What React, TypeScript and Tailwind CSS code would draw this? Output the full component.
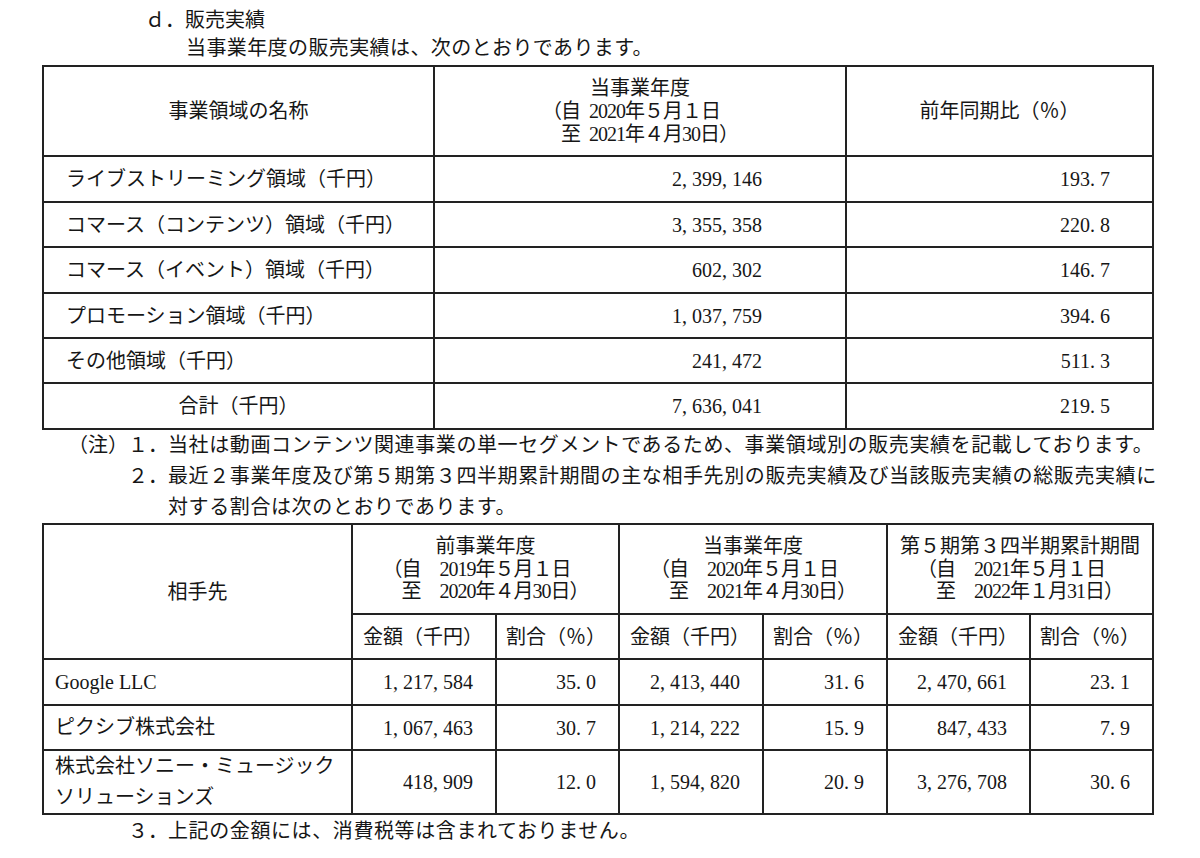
import React from 'react';

const cell = 'border-2 border-[#222] font-normal p-0';

function Num({ v }: { v: string }) {
  return (
    <>
      {v.split('').map((c, i) =>
        c === ',' || c === '.' ? (
          <span key={i} className="inline-block w-[10px] text-left">
            {c}
          </span>
        ) : (
          <span key={i}>{c}</span>
        ),
      )}
    </>
  );
}

function Period({ title, from, to, lh }: { title: string; from: string; to: string; lh: string }) {
  return (
    <div className={`flex flex-col items-center ${lh}`}>
      <div>{title}</div>
      <div className="text-left tracking-[-1px] whitespace-pre">
        <div>{from}</div>
        <div>{to}</div>
      </div>
    </div>
  );
}

const sales = [
  { name: 'ライブストリーミング領域（千円）', amount: '2,399,146', ratio: '193.7', h: 'h-[46px]' },
  { name: 'コマース（コンテンツ）領域（千円）', amount: '3,355,358', ratio: '220.8', h: 'h-[45px]' },
  { name: 'コマース（イベント）領域（千円）', amount: '602,302', ratio: '146.7', h: 'h-[46px]' },
  { name: 'プロモーション領域（千円）', amount: '1,037,759', ratio: '394.6', h: 'h-[45px]' },
  { name: 'その他領域（千円）', amount: '241,472', ratio: '511.3', h: 'h-[45px]' },
];

const clients = [
  {
    name: ['Google LLC'],
    v: ['1,217,584', '35.0', '2,413,440', '31.6', '2,470,661', '23.1'],
    h: 'h-[46px]',
  },
  {
    name: ['ピクシブ株式会社'],
    v: ['1,067,463', '30.7', '1,214,222', '15.9', '847,433', '7.9'],
    h: 'h-[45px]',
  },
  {
    name: ['株式会社ソニー・ミュージック', 'ソリューションズ'],
    v: ['418,909', '12.0', '1,594,820', '20.9', '3,276,708', '30.6'],
    h: 'h-[63px]',
  },
];

export default function App() {
  return (
    <div className="w-[1200px] h-[858px] overflow-hidden bg-white text-[#161616] text-[20px] font-['Liberation_Serif','Noto_Sans_CJK_JP',serif] whitespace-nowrap">
      <div className="pt-[6px] leading-[28px]">
        <div className="pl-[145px]">ｄ．販売実績</div>
        <div className="pl-[186px] tracking-[0.4px]">当事業年度の販売実績は、次のとおりであります。</div>
      </div>

      <table className="mt-[3px] ml-[42px] w-[1110px] table-fixed border-collapse">
        <colgroup>
          <col className="w-[391px]" />
          <col className="w-[412px]" />
          <col className="w-[307px]" />
        </colgroup>
        <thead>
          <tr className="h-[90px]">
            <th className={`${cell} text-center`}>事業領域の名称</th>
            <th className={`${cell} text-center`}>
              <Period
                title="当事業年度"
                from={'（自\u20022020年５月１日'}
                to={'　至\u20022021年４月30日）'}
                lh="leading-[23px]"
              />
            </th>
            <th className={`${cell} text-center`}>前年同期比（％）</th>
          </tr>
        </thead>
        <tbody>
          {sales.map((r) => (
            <tr key={r.name} className={r.h}>
              <td className={`${cell} pl-[22px] text-left`}>{r.name}</td>
              <td className={`${cell} pr-[83px] text-right`}>
                <Num v={r.amount} />
              </td>
              <td className={`${cell} pr-[42px] text-right`}>
                <Num v={r.ratio} />
              </td>
            </tr>
          ))}
          <tr className="h-[46px]">
            <td className={`${cell} text-center`}>合計（千円）</td>
            <td className={`${cell} pr-[83px] text-right`}>
              <Num v="7,636,041" />
            </td>
            <td className={`${cell} pr-[42px] text-right`}>
              <Num v="219.5" />
            </td>
          </tr>
        </tbody>
      </table>

      <div className="pl-[68px] leading-[31px] tracking-[0.6px]">
        <div className="flex">
          <span className="w-[60px] shrink-0 tracking-normal">（注）</span>
          <span className="w-[40px] shrink-0 tracking-normal">１．</span>
          <span>当社は動画コンテンツ関連事業の単一セグメントであるため、事業領域別の販売実績を記載しております。</span>
        </div>
        <div className="flex">
          <span className="w-[60px] shrink-0" />
          <span className="w-[40px] shrink-0 tracking-normal">２．</span>
          <span>
            最近２事業年度及び第５期第３四半期累計期間の主な相手先別の販売実績及び当該販売実績の総販売実績に
            <br />
            対する割合は次のとおりであります。
          </span>
        </div>
      </div>

      <table className="ml-[42px] w-[1110px] table-fixed border-collapse">
        <colgroup>
          <col className="w-[309px]" />
          <col className="w-[144px]" />
          <col className="w-[123px]" />
          <col className="w-[144px]" />
          <col className="w-[124px]" />
          <col className="w-[143px]" />
          <col className="w-[123px]" />
        </colgroup>
        <thead>
          <tr className="h-[90px]">
            <th rowSpan={2} className={`${cell} text-center`}>
              相手先
            </th>
            <th colSpan={2} className={`${cell} text-center`}>
              <Period
                title="前事業年度"
                from="（自　2019年５月１日"
                to="　至　2020年４月30日）"
                lh="leading-[22.5px]"
              />
            </th>
            <th colSpan={2} className={`${cell} text-center`}>
              <Period
                title="当事業年度"
                from="（自　2020年５月１日"
                to="　至　2021年４月30日）"
                lh="leading-[22.5px]"
              />
            </th>
            <th colSpan={2} className={`${cell} text-center`}>
              <Period
                title="第５期第３四半期累計期間"
                from="（自　2021年５月１日"
                to="　至　2022年１月31日）"
                lh="leading-[22.5px]"
              />
            </th>
          </tr>
          <tr className="h-[45px]">
            {[0, 1, 2].map((g) => (
              <React.Fragment key={g}>
                <th className={`${cell} pl-[10px] text-left`}>金額（千円）</th>
                <th className={`${cell} pl-[9px] text-left`}>割合（％）</th>
              </React.Fragment>
            ))}
          </tr>
        </thead>
        <tbody>
          {clients.map((r) => (
            <tr key={r.name[0]} className={r.h}>
              <td className={`${cell} pl-[11px] text-left leading-[31px]`}>
                {r.name.map((n) => (
                  <div key={n}>{n}</div>
                ))}
              </td>
              {r.v.map((v, i) => (
                <td key={i} className={`${cell} pr-[22px] text-right`}>
                  <Num v={v} />
                </td>
              ))}
            </tr>
          ))}
        </tbody>
      </table>

      <div className="pl-[128px] leading-[32px] tracking-[0.6px] flex">
        <span className="w-[40px] shrink-0 tracking-normal">３．</span>
        <span>上記の金額には、消費税等は含まれておりません。</span>
      </div>
    </div>
  );
}
